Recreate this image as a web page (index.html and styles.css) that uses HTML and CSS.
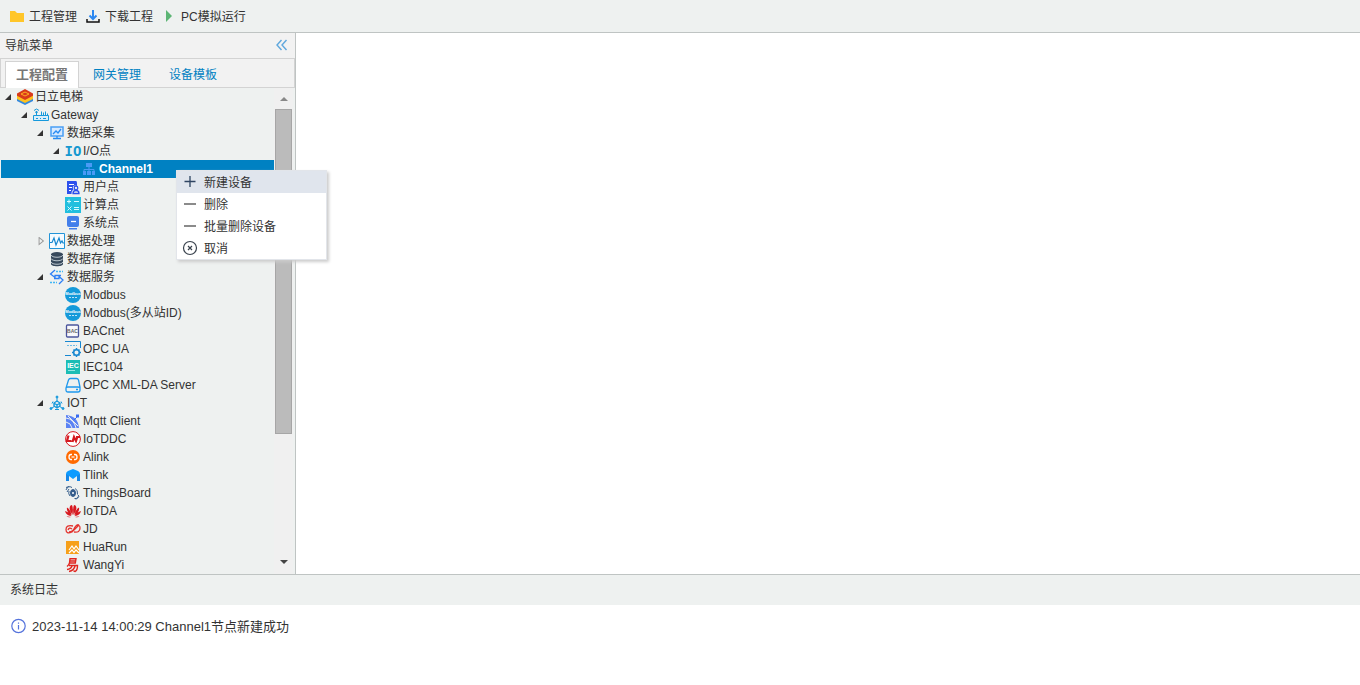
FILE: index.html
```html
<!DOCTYPE html>
<html lang="zh-CN">
<head>
<meta charset="utf-8">
<title>工程管理</title>
<link rel="stylesheet" href="styles.css">
</head>
<body>
<div class="app">
  <header class="toolbar">
    <button class="tool" type="button"><svg class="icon" viewBox="0 0 16 16"><path fill="#ffc629" d="M1 2h5l2 2h7v9H1z"/></svg>工程管理</button>
    <button class="tool" type="button"><svg class="icon" viewBox="0 0 16 16"><path fill="none" stroke="#2b87f0" stroke-width="2" d="M8 1v9M4.500 6.500L8 10l3.500-3.500"/><path fill="none" stroke="#111" stroke-width="1.500" d="M2 10v3h12v-3"/></svg>下载工程</button>
    <button class="tool" type="button"><svg class="icon" viewBox="0 0 16 16"><path fill="#5cb574" d="M5 1l6 6-6 6z"/></svg>PC模拟运行</button>
  </header>
  <div class="middle">
    <aside class="sidebar">
      <div class="nav-head">
        <h2 class="nav-title">导航菜单</h2>
        <button class="collapse" type="button" aria-label="折叠"><svg class="icon" viewBox="0 0 16 16"><path fill="none" stroke="#5ea7dd" stroke-width="1.400" d="M7.500 2L3 7l4.500 5M12.500 2L8 7l4.500 5"/></svg></button>
      </div>
      <div class="tabs" role="tablist">
        <button class="tab tab-active" type="button" role="tab" aria-selected="true">工程配置</button>
        <button class="tab" type="button" role="tab" aria-selected="false">网关管理</button>
        <button class="tab" type="button" role="tab" aria-selected="false">设备模板</button>
      </div>
      <div class="tree-pane">
        <ul class="tree">
          <li class="node l0"><span class="arrow open"></span><svg class="icon" viewBox="0 0 16 16"><path fill="#3289df" d="M0 9v3l8 4 8-4V9l-8 3z"/><path fill="#ffc11e" d="M0 6v4l8 4 8-4V6l-8 3z"/><path fill="#d83a1c" d="M0 4.500L8 0l8 4.500v2.300L8 11 0 6.800z"/><path fill="none" stroke="#ffad20" d="M4 5l4-2 4 2-4 2z"/></svg>日立电梯</li>
          <li class="node l1"><span class="arrow open"></span><svg class="icon" viewBox="0 0 16 16"><g fill="none" stroke="#1599dc"><path fill="#d9eefa" d="M.500 8.500h15v5H.500z"/><path d="M3.500 8V4M8.500 8V4.500M10.500 8V5.500M12.500 8V4.500M14.500 8V6.500M1 3.500q2.500-3 5 0M2 5.500q1.500-2 3 0"/><path d="M3 11.500h2M7 11.500h1M10 11.500h3"/></g></svg>Gateway</li>
          <li class="node l2"><span class="arrow open"></span><svg class="icon" viewBox="0 0 16 16"><rect x="2" y="2" width="12" height="9" fill="#d6e9ff" stroke="#489ef5" stroke-width="1.500"/><path fill="none" stroke="#278bf2" stroke-width="1.300" d="M4 9l3-3 2 2 3-4M8 11v2M4 13.500h8"/></svg>数据采集</li>
          <li class="node l3"><span class="arrow open"></span><svg class="icon" viewBox="0 0 16 16"><text class="glyph-io" x="8" y="13">IO</text></svg>I/O点</li>
          <li class="node l4 selected"><span class="arrow"></span><svg class="icon" viewBox="0 0 16 16"><g fill="#4a9af6"><path d="M5 2h6v4H5zM2 10h3v4H2zM6 10h4v4H6zM11 10h3v4h-3z"/><path fill="none" stroke="#4a9af6" d="M8 6v5M3 11V8.500h10V11"/></g></svg>Channel1</li>
          <li class="node l3"><span class="arrow"></span><svg class="icon" viewBox="0 0 16 16"><path fill="#2c50ec" d="M2 2h9q1 0 1 2v11H2z"/><path stroke="#fff" d="M4 5.500h5M4 8.500h3M4 11.500h2"/><path fill="#eef1f0" d="M6.500 15q0-4 2-4-2-4 1.500-4.500Q14 7 13 10.500q2 1 2 4.500z"/><path fill="none" stroke="#2c50ec" stroke-width="1.300" d="M8 14.500q0-3 3-3t3 3z"/><circle cx="11" cy="9" r="1.800" fill="none" stroke="#2c50ec" stroke-width="1.300"/></svg>用户点</li>
          <li class="node l3"><span class="arrow"></span><svg class="icon" viewBox="0 0 16 16"><path fill="#22bfde" d="M0 0h16v16H0z"/><path fill="none" stroke="#d7fbff" d="M2 4.500h4M4 2.500v4M9 4.500h5M2.500 9.500l4 4M6.500 9.500l-4 4M9 10.500h5M9 12.500h5"/></svg>计算点</li>
          <li class="node l3"><span class="arrow"></span><svg class="icon" viewBox="0 0 16 16"><rect x="2" y="1" width="12" height="11" rx="2" fill="#437fea"/><path fill="#437fea" d="M4 13h8v1.500H4z"/><path stroke="#fff" stroke-width="1.300" d="M6 6.500h5"/></svg>系统点</li>
          <li class="node l2"><span class="arrow closed"></span><svg class="icon" viewBox="0 0 16 16"><path fill="#f5fbff" stroke="#2294d8" d="M.500.500h15v15H.500z"/><path fill="none" stroke="#1687d0" stroke-width="1.200" d="M1 9.500h2L5 5l2 7 3-7 1.500 5L13 8l1 2h1"/></svg>数据处理</li>
          <li class="node l2"><span class="arrow"></span><svg class="icon" viewBox="0 0 16 16"><path fill="#37495c" d="M2 3v10c0 3 12 3 12 0V3z"/><ellipse cx="8" cy="3.500" rx="6" ry="2.500" fill="#37495c"/><path fill="none" stroke="#dbe3e8" stroke-width=".8" d="M2 4c1 3 11 3 12 0M2 7.500c1 3 11 3 12 0M2 11c1 3 11 3 12 0"/></svg>数据存储</li>
          <li class="node l2"><span class="arrow open"></span><svg class="icon" viewBox="0 0 16 16"><g fill="none" stroke="#2c7ff5" stroke-width="1.300"><path d="M6 1L1.500 5 6 8.500V6.500h6M10 15l4-4-4-3.500v2H5"/><path stroke="#40b8f5" stroke-dasharray="2 1" d="M7 2.500h7M1 13.500h7"/></g></svg>数据服务</li>
          <li class="node l3"><span class="arrow"></span><svg class="icon" viewBox="0 0 16 16"><circle cx="8" cy="8" r="8" fill="#149ada"/><text class="glyph-modbus" x="8" y="8">Modbus</text><path stroke="#bde4f6" stroke-dasharray="2 1" d="M4 10.500h8"/></svg>Modbus</li>
          <li class="node l3"><span class="arrow"></span><svg class="icon" viewBox="0 0 16 16"><circle cx="8" cy="8" r="8" fill="#149ada"/><text class="glyph-modbus" x="8" y="8">Modbus</text><path stroke="#bde4f6" stroke-dasharray="2 1" d="M4 10.500h8"/></svg>Modbus(多从站ID)</li>
          <li class="node l3"><span class="arrow"></span><svg class="icon" viewBox="0 0 16 16"><rect x="1.500" y="2" width="12" height="12" rx="1" fill="#f8f8fb" stroke="#4b559d" stroke-width="1.300"/><text class="glyph-bac" x="7.500" y="10">BAC</text></svg>BACnet</li>
          <li class="node l3"><span class="arrow"></span><svg class="icon" viewBox="0 0 16 16"><path fill="none" stroke="#1687d0" d="M0 .500h15.500V7M0 14.500h6"/><path fill="none" stroke="#6dbbe5" stroke-dasharray="2 1" d="M2 4.500h10"/><circle cx="11.500" cy="11.500" r="2.800" fill="none" stroke="#1687d0" stroke-width="1.500"/><path stroke="#1687d0" stroke-width="1.500" d="M11.500 7v2M11.500 14v2M7 11.500h2M14 11.500h2M8.500 8.500l1 1M13.500 13.500l1 1M14.500 8.500l-1 1M8.500 14.500l1-1"/></svg>OPC UA</li>
          <li class="node l3"><span class="arrow"></span><svg class="icon" viewBox="0 0 16 16"><path fill="#1bbdb5" d="M1 1h14v14H1z"/><text class="glyph-iec" x="8" y="9">IEC</text><path stroke="#91e8e2" d="M3 11.500h7"/></svg>IEC104</li>
          <li class="node l3"><span class="arrow"></span><svg class="icon" viewBox="0 0 16 16"><path fill="none" stroke="#1d98ed" stroke-width="1.300" d="M3.500 3q.500-1.500 2-1.500h6q1.500 0 2 1.500l1.500 7v3q0 2-2 2H3q-2 0-2-2v-2zM1 11q0-1 2-1h10q2 0 2 1M11 12.500h2"/></svg>OPC XML-DA Server</li>
          <li class="node l2"><span class="arrow open"></span><svg class="icon" viewBox="0 0 16 16"><g fill="#1799dc" stroke="#1799dc"><path fill="none" d="M8 3v3M3 13l3-2M13 13l-3-2M4 6.500l-1 2M12 6.500l1 2M6 14.500h4"/><path fill="none" stroke-width="1.400" d="M8 6l3 2v3l-3 2-3-2V8zM5 8l3 2 3-2M8 10v3"/><circle cx="8" cy="2" r="1"/><circle cx="2" cy="13.500" r="1"/><circle cx="14" cy="13.500" r="1"/></g></svg>IOT</li>
          <li class="node l3"><span class="arrow"></span><svg class="icon" viewBox="0 0 16 16"><path fill="#5b83f4" d="M1 2q12 1 13 13H1z"/><g fill="none" stroke="#eef1f0"><path d="M1 5q8 1 10 10M1 9q5 1 6 6M3 3l10 10"/></g><path fill="#376bf1" d="M11 1.500h3v3h-3z"/><path stroke="#376bf1" d="M9 7l4-4"/></svg>Mqtt Client</li>
          <li class="node l3"><span class="arrow"></span><svg class="icon" viewBox="0 0 16 16"><circle cx="8" cy="8" r="7.400" fill="#fff" stroke="#d51920"/><path fill="none" stroke="#d51920" stroke-width="2.200" d="M3.500 4.500L2 10h4.500M7.500 11L9 6l2 4 1.500-4.500M11 6h4"/></svg>IoTDDC</li>
          <li class="node l3"><span class="arrow"></span><svg class="icon" viewBox="0 0 16 16"><circle cx="8" cy="8" r="7" fill="#ff6a00"/><path fill="none" stroke="#fff" stroke-width="1.300" d="M7 5.500H6Q4 5.500 4 8t2 2.500h1M9 5.500h1q2 0 2 2.500t-2 2.500H9"/><path stroke="#fff" stroke-width="1.200" d="M6.500 8h3"/></svg>Alink</li>
          <li class="node l3"><span class="arrow"></span><svg class="icon" viewBox="0 0 16 16"><path fill="#0c9bff" d="M1 7q0-2 2-3l5-2 5 2q2 1 2 3v7h-3V9l-4 3-4-3v5H1z"/><path fill="#1587e8" d="M1 7l3 2v5H1zM15 7l-3 2v5h3z"/></svg>Tlink</li>
          <li class="node l3"><span class="arrow"></span><svg class="icon" viewBox="0 0 16 16"><g fill="none" stroke="#345d8c"><ellipse cx="8" cy="8" rx="2.500" ry="3.500" fill="#345d8c"/><circle cx="8" cy="8" r="1" fill="#fff" stroke="none"/><path d="M1 5q2-5 6-2.500M1 2.500l3-1M2 7l2-3M13.500 10q0 4-4 3.500M11 14.500l3-3M4 6q-1 3 1 5M10 3.500q3 1 2.500 6"/></g></svg>ThingsBoard</li>
          <li class="node l3"><span class="arrow"></span><svg class="icon" viewBox="0 0 16 16"><g fill="#d71920"><path d="M7.500 12Q3 6 5.500 2.500L7 2q1.500 3 .500 10zM8.500 12Q13 6 10.500 2.500L9 2q-1.500 3-.500 10zM6.700 12.500Q1 9 2 4.500q3.500 2 4.700 8zM9.300 12.500Q15 9 14 4.500q-3.500 2-4.700 8zM6.300 13.200Q1 12.500 0 8q4 1 6.300 5.200zM9.700 13.200Q15 12.500 16 8q-4 1-6.300 5.200zM6 14q-3 1-4.500-.8zM10 14q3 1 4.500-.8z"/></g></svg>IoTDA</li>
          <li class="node l3"><span class="arrow"></span><svg class="icon" viewBox="0 0 16 16"><path fill="none" stroke="#e3332e" stroke-width="1.300" d="M8 5Q1 3.500 1 8.500t6 2.500l5-5q3-3 3 1 0 5-6 4M3 9q1-3 4-1M4 11q4 0 6-5 2-3 4-2"/></svg>JD</li>
          <li class="node l3"><span class="arrow"></span><svg class="icon" viewBox="0 0 16 16"><path fill="#f6a01a" d="M1 2h13v13H1z"/><path fill="none" stroke="#fff" stroke-width="1.200" d="M4 11l3-4 2 3 2-3 3 4M4 14l3-3 2 2.500 2-2.500 3 3"/></svg>HuaRun</li>
          <li class="node l3"><span class="arrow"></span><svg class="icon" viewBox="0 0 16 16"><path fill="none" stroke="#e0261f" stroke-width="1.400" d="M5 1.700h6L10.300 6H4.500zM5 4h5.500M4.500 6Q4 8 2 9.500M4 8.500h8.500q0 5-2.500 6l-1.500-.7M7 9q-1 3-5 3.500M10 9q-1 4.500-6 5.500"/></svg>WangYi</li>
        </ul>
        <div class="scroll" aria-hidden="true">
          <span class="scroll-up"></span>
          <span class="scroll-track"><span class="scroll-thumb"></span></span>
          <span class="scroll-down"></span>
        </div>
      </div>
    </aside>
    <main class="workspace"></main>
  </div>
  <section class="log">
    <h2 class="log-title">系统日志</h2>
    <p class="log-row"><svg class="icon" viewBox="0 0 16 16"><circle cx="8.500" cy="7" r="6.700" fill="none" stroke="#5573dc" stroke-width="1.200"/><path stroke="#5573dc" stroke-width="1.200" d="M8.500 6v4.500M8.500 3.500v1.300"/></svg>2023-11-14 14:00:29 Channel1节点新建成功</p>
  </section>
</div>
<div class="menu" role="menu">
  <button class="menu-item menu-hover" type="button" role="menuitem"><svg class="icon" viewBox="0 0 16 16"><path stroke="#2f4562" stroke-width="1.300" d="M2.500 8.500h11M8 3v11"/></svg>新建设备</button>
  <button class="menu-item" type="button" role="menuitem"><svg class="icon" viewBox="0 0 16 16"><path stroke="#8b8b8b" stroke-width="2" d="M2 9h12"/></svg>删除</button>
  <button class="menu-item" type="button" role="menuitem"><svg class="icon" viewBox="0 0 16 16"><path stroke="#8b8b8b" stroke-width="2" d="M2 9h12"/></svg>批量删除设备</button>
  <button class="menu-item" type="button" role="menuitem"><svg class="icon" viewBox="0 0 16 16"><circle cx="8" cy="9" r="6.500" fill="none" stroke="#39424d" stroke-width="1.200"/><path stroke="#39424d" stroke-width="1.200" d="M6 7l4 4M10 7l-4 4"/></svg>取消</button>
</div>
</body>
</html>
```
FILE: styles.css
```css
* { box-sizing: border-box; }
body, button {
  font-family: "Liberation Sans", "Noto Sans CJK SC", sans-serif;
  font-size: 12px;
  color: #333;
}
body { margin: 0; background: #fff; }
button { border: 0; padding: 0; background: none; cursor: pointer; }
h2, p, ul { margin: 0; padding: 0; font-weight: normal; }
.icon { flex: none; width: 16px; height: 16px; overflow: visible; }

.app { display: flex; flex-direction: column; min-height: 100vh; }
.toolbar {
  display: flex;
  align-items: center;
  gap: 8px;
  height: 33px;
  padding: 2px 9px 0;
  background: #eef1f0;
  border-bottom: 1px solid #bfc4c3;
}
.tool { display: flex; align-items: center; gap: 4px; line-height: 18px; }

.middle { display: flex; flex: 1; }
.sidebar {
  display: flex;
  flex-direction: column;
  flex: none;
  width: 296px;
  background: #eef1f0;
  border-right: 1px solid #bfc4c3;
}
.nav-head {
  display: flex;
  align-items: center;
  justify-content: space-between;
  height: 26px;
  padding: 0 5px;
  background: #f2f2f2;
  border-bottom: 1px solid #d3d3d3;
}
.nav-title { font-size: 12px; line-height: 18px; }
.collapse { display: flex; }
.tabs {
  display: flex;
  align-items: flex-end;
  height: 29px;
  padding: 0 4px;
  background: #f2f2f2;
  border: 1px solid #d3d3d3;
  border-top: 0;
}
.tab {
  height: 27px;
  margin-bottom: -1px;
  padding: 0 13px 3px;
  border: 1px solid transparent;
  border-bottom: 0;
  color: #0081c2;
}
.tab-active {
  padding: 0 10px 3px;
  background: #fff;
  border-color: #d3d3d3;
  color: #777;
  font-size: 13px;
  font-weight: bold;
}

.tree-pane { display: flex; padding: 0 2px 0 1px; }
.tree { flex: 1; list-style: none; }
.node { display: flex; align-items: center; height: 18px; line-height: 18px; white-space: nowrap; }
.node .icon { margin-right: 2px; }
.l1 { padding-left: 16px; }
.l2 { padding-left: 32px; }
.l3 { padding-left: 48px; }
.l4 { padding-left: 64px; }
.selected { background: #0081c2; color: #fff; font-weight: bold; }
.arrow { flex: none; width: 16px; padding-left: 4px; }
.open::before {
  content: "";
  display: block;
  width: 0;
  border-left: 6px solid transparent;
  border-bottom: 6px solid #333;
}
.closed::before {
  content: "";
  display: block;
  width: 8px;
  height: 9px;
  background: #999;
  clip-path: polygon(evenodd, 20% 0, 90% 50%, 20% 100%, 20% 0, 32% 22%, 32% 78%, 70% 50%, 32% 22%);
}

.scroll {
  display: flex;
  flex-direction: column;
  align-items: center;
  width: 19px;
  padding: 9px 0 10px;
  background: #f0f0f0;
}
.scroll-up { margin-bottom: 8px; border: 4px solid transparent; border-top: 0; border-bottom-color: #888; }
.scroll-track { flex: 1; width: 17px; }
.scroll-thumb { display: block; height: 72%; background: #bbb; border: 1px solid #a6a6a6; }
.scroll-down { border: 4px solid transparent; border-bottom: 0; border-top-color: #444; }
.workspace { flex: 1; }

.log { min-height: 111px; border-top: 1px solid #bfc4c3; }
.log-title { padding: 1px 10px 0; background: #eef1f0; font-size: 12px; line-height: 29px; }
.log-row { display: flex; align-items: center; gap: 6px; padding: 12px 10px; font-size: 13px; line-height: 20px; }

.menu {
  position: absolute;
  left: 176px;
  top: 170px;
  width: 151px;
  background: #fff;
  border: 1px solid #e2e5ea;
  box-shadow: 2px 2px 3px #ccc;
}
.menu-item { display: flex; align-items: center; gap: 6px; width: 100%; height: 22px; padding: 0 5px 2px; }
.menu-hover { background: #e0e5ed; }
.glyph-io { font: bold 14px "DejaVu Sans Mono", monospace; fill: #1599d0; text-anchor: middle; }
.glyph-modbus { font: bold 4px "Liberation Sans", sans-serif; fill: #fff; text-anchor: middle; }
.glyph-bac { font: bold 5px "Liberation Sans", sans-serif; fill: #666; text-anchor: middle; }
.glyph-iec { font: bold 7px "Liberation Sans", sans-serif; fill: #fff; text-anchor: middle; }
```
